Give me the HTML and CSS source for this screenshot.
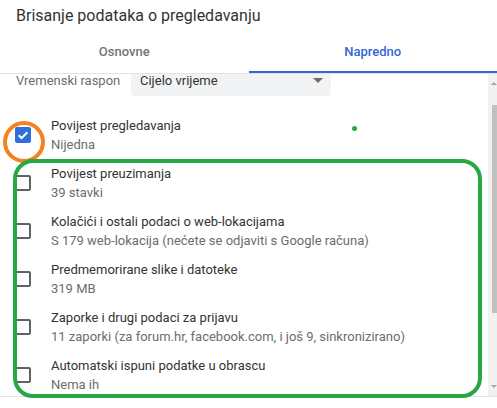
FILE: index.html
```html
<!DOCTYPE html>
<html lang="hr">
<head>
<meta charset="utf-8">
<title>Brisanje podataka o pregledavanju</title>
<link rel="stylesheet" href="styles.css">
</head>
<body>
<div class="dialog">
  <div class="title">Brisanje podataka o pregledavanju</div>
  <div class="tabs">
    <div class="tab">Osnovne</div>
    <div class="tab active">Napredno</div>
  </div>
  <div class="scroll">
    <div class="content">
      <div class="range">
        <span class="range-label">Vremenski raspon</span>
        <div class="select">
          <span>Cijelo vrijeme</span>
          <span class="arrow"></span>
        </div>
      </div>
      <div class="row">
        <span class="cb checked">
          <svg viewBox="0 0 16 16" width="16" height="16"><path d="M3.6 8.2 L6.6 11 L12.4 5.2" fill="none" stroke="#fff" stroke-width="2"/></svg>
        </span>
        <div class="texts"><div class="t1">Povijest pregledavanja</div><div class="t2">Nijedna</div></div>
      </div>
      <div class="row">
        <span class="cb"></span>
        <div class="texts"><div class="t1">Povijest preuzimanja</div><div class="t2">39 stavki</div></div>
      </div>
      <div class="row">
        <span class="cb"></span>
        <div class="texts"><div class="t1">Kolačići i ostali podaci o web-lokacijama</div><div class="t2">S 179 web-lokacija (nećete se odjaviti s Google računa)</div></div>
      </div>
      <div class="row">
        <span class="cb"></span>
        <div class="texts"><div class="t1">Predmemorirane slike i datoteke</div><div class="t2">319 MB</div></div>
      </div>
      <div class="row">
        <span class="cb"></span>
        <div class="texts"><div class="t1">Zaporke i drugi podaci za prijavu</div><div class="t2">11 zaporki (za forum.hr, facebook.com, i još 9, sinkronizirano)</div></div>
      </div>
      <div class="row">
        <span class="cb"></span>
        <div class="texts"><div class="t1">Automatski ispuni podatke u obrascu</div><div class="t2">Nema ih</div></div>
      </div>
    </div>
    <div class="scrollbar">
      <span class="sb-up"></span>
      <span class="sb-thumb"></span>
      <span class="sb-down"></span>
    </div>
  </div>
  <div class="footer"></div>
  <span class="ring"></span>
  <span class="frame"></span>
  <span class="dot"></span>
</div>
</body>
</html>
```
FILE: styles.css
```css
html, body {
  margin: 0;
  padding: 0;
  background: #fff;
}
body {
  font-family: Roboto, "Liberation Sans", Arial, sans-serif;
  color: #333;
  width: 497px;
  height: 408px;
  overflow: hidden;
}
.dialog {
  position: relative;
  width: 497px;
  height: 408px;
  display: flex;
  flex-direction: column;
}
.title {
  height: 30px;
  box-sizing: border-box;
  padding: 6px 16px 0;
  font-size: 16px;
  line-height: 20px;
  color: #333;
}
.tabs {
  display: flex;
  height: 44px;
  box-sizing: border-box;
  border-bottom: 1px solid #e3e3e3;
}
.tab {
  flex: 1;
  display: flex;
  align-items: center;
  justify-content: center;
  font-size: 13px;
  font-weight: 500;
  color: #757575;
  position: relative;
}
.tab.active {
  color: #3367d6;
}
.tab.active::after {
  content: "";
  position: absolute;
  left: 0;
  right: 0;
  bottom: 0;
  height: 2px;
  background: #3367d6;
}
.scroll {
  height: 322px;
  display: flex;
  overflow: hidden;
}
.content {
  flex: 1;
  margin-top: -10px;
}
.range {
  display: flex;
  align-items: center;
  height: 32px;
  padding-left: 16px;
  margin-bottom: 15px;
}
.range-label {
  font-size: 13px;
  color: #6d6d6d;
  width: 115px;
}
.select {
  width: 200px;
  height: 32px;
  box-sizing: border-box;
  background: #f1f3f4;
  border-radius: 4px;
  display: flex;
  align-items: center;
  justify-content: space-between;
  padding: 0 8px 0 9px;
  font-size: 13px;
  color: #333;
}
.arrow {
  width: 0;
  height: 0;
  border-left: 5px solid transparent;
  border-right: 5px solid transparent;
  border-top: 5px solid #6d6d6d;
}
.row {
  display: flex;
  align-items: center;
  height: 48px;
  padding-left: 15px;
}
.cb {
  width: 16px;
  height: 16px;
  box-sizing: border-box;
  border: 2px solid #5f6368;
  border-radius: 2px;
  margin-right: 20px;
  flex: none;
}
.cb.checked {
  border: none;
  background: #2f6fdc;
}
.cb svg {
  display: block;
}
.texts {
  font-size: 13px;
  line-height: 19px;
}
.t1 {
  color: #333;
}
.t2 {
  color: #6d6d6d;
}
.scrollbar {
  width: 9px;
  flex: none;
  background: #f1f1f1;
  display: flex;
  flex-direction: column;
  align-items: flex-end;
}
.sb-up, .sb-down {
  width: 0;
  height: 0;
  border-left: 3px solid transparent;
  border-right: 3px solid transparent;
  margin-right: 0;
}
.sb-up {
  margin-top: 8px;
  border-bottom: 3px solid #a3a3a3;
}
.sb-thumb {
  width: 5px;
  height: 208px;
  margin-top: 20px;
  background: #c1c1c1;
}
.sb-down {
  margin-top: auto;
  margin-bottom: 8px;
  border-top: 3px solid #a3a3a3;
}
.footer {
  flex: 1;
  border-top: 1px solid #e3e3e3;
}
.ring {
  position: absolute;
  left: 3px;
  top: 121px;
  width: 42px;
  height: 42px;
  box-sizing: border-box;
  border: 4px solid #f5821f;
  border-radius: 50%;
}
.frame {
  position: absolute;
  left: 13px;
  top: 159px;
  width: 469px;
  height: 239px;
  box-sizing: border-box;
  border: 4px solid #27a845;
  border-radius: 20px;
}
.dot {
  position: absolute;
  left: 352px;
  top: 126px;
  width: 5px;
  height: 5px;
  border-radius: 50%;
  background: #27a845;
}
```
